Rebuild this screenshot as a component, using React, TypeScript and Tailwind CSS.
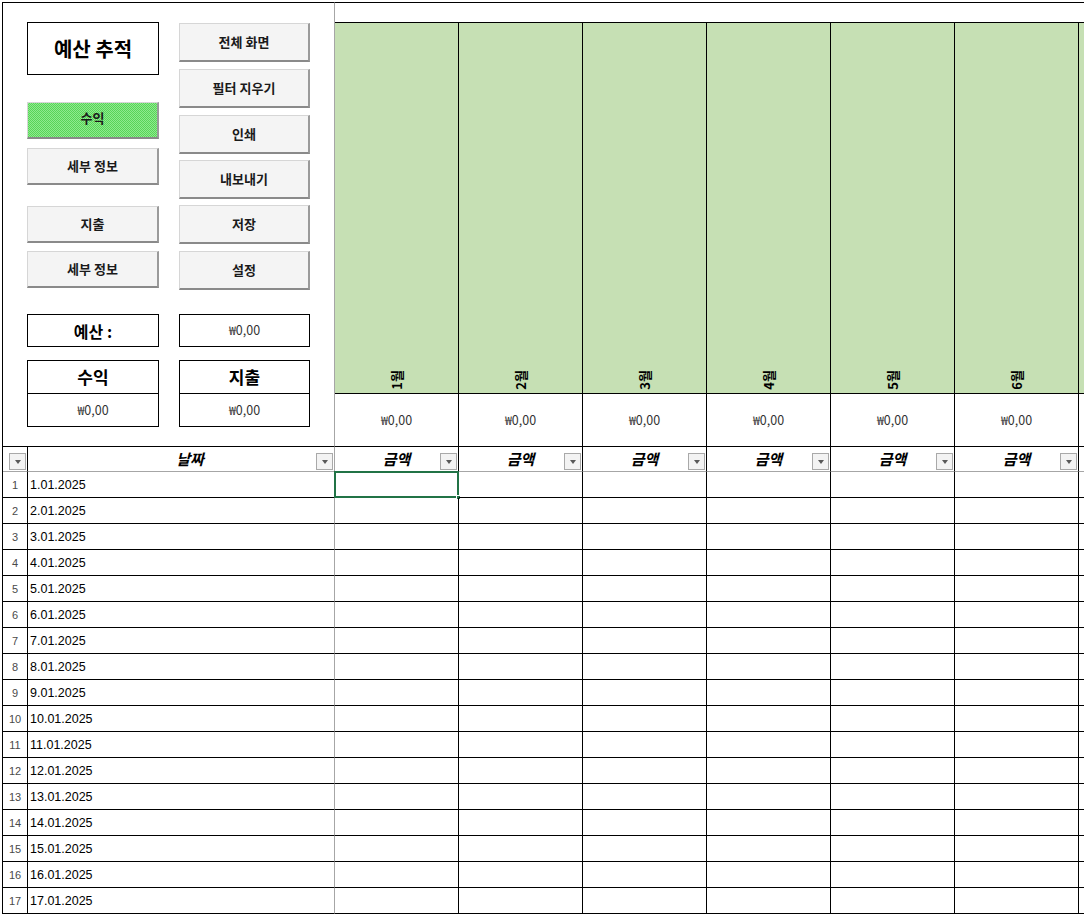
import React from 'react';

const months = ['1월', '2월', '3월', '4월', '5월', '6월'];
const dates = Array.from({ length: 17 }, (_, i) => `${i + 1}.01.2025`);

const kr = 'font-["Noto_Sans_CJK_KR","Noto_Sans",sans-serif]';

function FormButton({ label, height, active }: { label: string; height: string; active?: boolean }) {
  return (
    <div
      className={`flex items-center justify-center border border-[#d6d6d6] border-r-2 border-b-2 border-r-[#9a9a9a] border-b-[#8a8a8a] text-[13px] font-semibold text-[#1a1a1a] ${height} ${
        active
          ? 'bg-[repeating-conic-gradient(#58d458_0_25%,#8fea8f_0_50%)] bg-[length:2px_2px] pb-[4px]'
          : 'bg-[#f4f4f4]'
      }`}
    >
      {label}
    </div>
  );
}

function FilterButton() {
  return (
    <div className="absolute right-[1px] bottom-[1px] flex h-[17px] w-[17px] items-center justify-center border border-[#a9a9a9] bg-[#f3f3f3]">
      <div className="h-0 w-0 border-x-[3.5px] border-t-[4px] border-x-transparent border-t-[#595959]" />
    </div>
  );
}

function TotalBox({ title }: { title: string }) {
  return (
    <div className="flex h-[67px] flex-col border border-black">
      <div className="flex h-[33px] items-center justify-center border-b border-black text-[17px] font-semibold">{title}</div>
      <div className="flex flex-1 items-center justify-center text-[12.5px] text-[#333]">₩0,00</div>
    </div>
  );
}

export default function App() {
  return (
    <div className={`h-[915px] w-[1084px] overflow-hidden bg-white pt-[2px] pl-[2px] text-black ${kr}`}>
      {/* top section */}
      <div className="flex h-[445px]">
        <div className="flex h-[445px] w-[333px] shrink-0 gap-[20px] border-t border-l border-b border-black border-r border-r-[#a6a6a6] pl-[24px]">
          <div className="flex w-[132px] flex-col">
            <div className="mt-[19px] flex h-[53px] items-center justify-center border border-black text-[20px] font-bold">
              예산 추적
            </div>
            <div className="mt-[27px]">
              <FormButton label="수익" height="h-[37px]" active />
            </div>
            <div className="mt-[9px]">
              <FormButton label="세부 정보" height="h-[37px]" />
            </div>
            <div className="mt-[21px]">
              <FormButton label="지출" height="h-[37px]" />
            </div>
            <div className="mt-[8px]">
              <FormButton label="세부 정보" height="h-[37px]" />
            </div>
            <div className="mt-[26px] flex h-[33px] items-center justify-center border border-black text-[16px] font-bold">
              예산 :
            </div>
            <div className="mt-[13px]">
              <TotalBox title="수익" />
            </div>
          </div>
          <div className="flex w-[131px] flex-col">
            <div className="mt-[20px]">
              <FormButton label="전체 화면" height="h-[39px]" />
            </div>
            <div className="mt-[7px]">
              <FormButton label="필터 지우기" height="h-[39px]" />
            </div>
            <div className="mt-[7px]">
              <FormButton label="인쇄" height="h-[39px]" />
            </div>
            <div className="mt-[6px]">
              <FormButton label="내보내기" height="h-[39px]" />
            </div>
            <div className="mt-[6px]">
              <FormButton label="저장" height="h-[39px]" />
            </div>
            <div className="mt-[7px]">
              <FormButton label="설정" height="h-[39px]" />
            </div>
            <div className="mt-[24px] flex h-[33px] items-center justify-center border border-black text-[12.5px] text-[#333]">
              ₩0,00
            </div>
            <div className="mt-[13px]">
              <TotalBox title="지출" />
            </div>
          </div>
        </div>

        <div className="flex flex-1 flex-col border-t border-black">
          <div className="h-[20px] border-b border-black" />
          <div className="flex">
            {months.map((m) => (
              <div key={m} className="flex w-[124px] shrink-0 flex-col border-r border-black">
                <div className="flex h-[371px] items-end justify-center border-b border-black bg-[#c6e0b4] pb-[3px]">
                  <span className="rotate-180 text-[13px] font-bold leading-none [writing-mode:vertical-rl] [text-orientation:sideways]">
                    {m}
                  </span>
                </div>
                <div className="flex h-[53px] items-center justify-center border-b border-black text-[12.5px] text-[#333]">
                  ₩0,00
                </div>
              </div>
            ))}
            <div className="flex flex-1 flex-col">
              <div className="h-[371px] border-b border-black bg-[#c6e0b4]" />
              <div className="h-[53px] border-b border-black" />
            </div>
          </div>
        </div>
      </div>

      {/* table */}
      <div className="grid grid-cols-[25px_307px_repeat(6,124px)_1fr] border-l border-black">
        <div className="relative h-[25px] border-r border-b border-r-black border-b-[#a6a6a6]">
          <FilterButton />
        </div>
        <div className="relative flex h-[25px] items-center justify-center border-r border-b border-r-[#a6a6a6] border-b-[#a6a6a6] pl-[18px] text-[15px] font-bold italic">
          날짜
          <FilterButton />
        </div>
        {months.map((m) => (
          <div
            key={m}
            className="relative flex h-[25px] items-center justify-center border-r border-b border-r-black border-b-[#a6a6a6] text-[15px] font-bold italic"
          >
            금액
            <FilterButton />
          </div>
        ))}
        <div className="h-[25px] border-b border-[#a6a6a6]" />

        {dates.map((d, i) => (
          <React.Fragment key={d}>
            <div className="flex h-[26px] items-center justify-center border-r border-b border-black pt-[2px] font-['Liberation_Sans',sans-serif] text-[11px] text-[#4a4a4a]">
              {i + 1}
            </div>
            <div className="flex h-[26px] items-center border-r border-b border-r-[#a6a6a6] border-b-black pt-[2px] pl-[2px] font-['Liberation_Sans',sans-serif] text-[12.5px]">
              {d}
            </div>
            {months.map((m, j) => (
              <div key={m} className="relative h-[26px] border-r border-b border-black">
                {i === 0 && j === 0 && (
                  <>
                    <div className="absolute -top-[1px] -left-[1px] -right-[1px] -bottom-[1px] border-2 border-[#217346]" />
                    <div className="absolute -right-[3px] -bottom-[3px] h-[5px] w-[5px] border border-white bg-[#217346]" />
                  </>
                )}
              </div>
            ))}
            <div className="h-[26px] border-b border-black" />
          </React.Fragment>
        ))}
      </div>
    </div>
  );
}
